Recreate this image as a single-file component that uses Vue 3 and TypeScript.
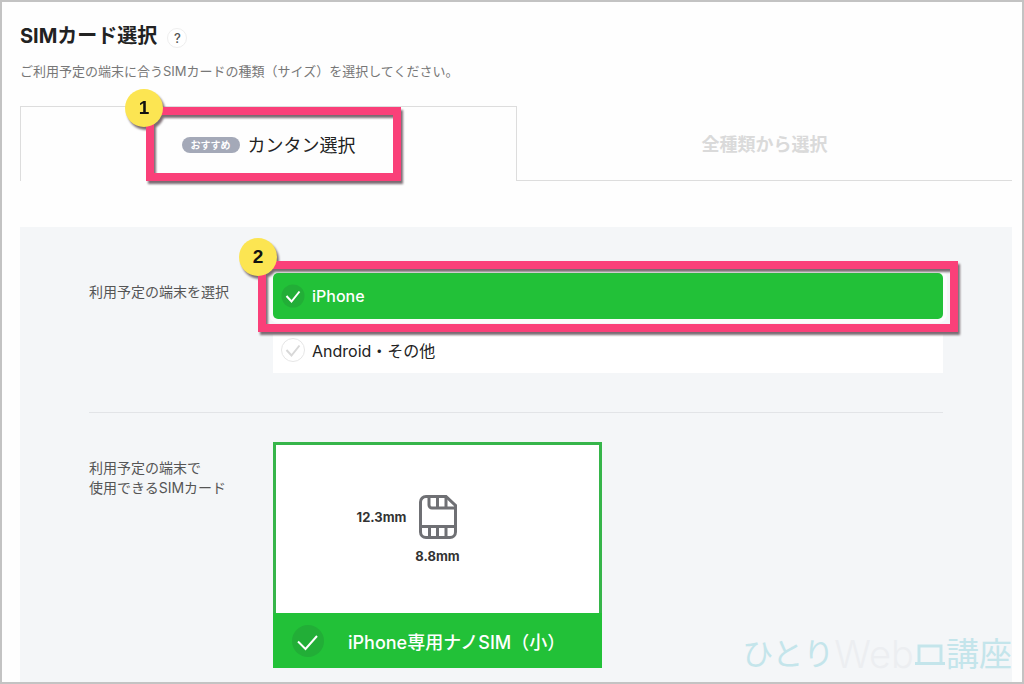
<script setup lang="ts">
import { ref } from 'vue'

const tab = ref<'easy' | 'all'>('easy')
const device = ref('iphone')
const card = ref('nano')

const devices = [
  { value: 'iphone', label: 'iPhone' },
  { value: 'android', label: 'Android・その他' },
]
</script>

<template>
  <main class="page">
    <header class="head">
      <h1>SIMカード選択</h1>
      <button class="help" type="button" aria-label="ヘルプ">?</button>
    </header>
    <p class="lead">ご利用予定の端末に合うSIMカードの種類（サイズ）を選択してください。</p>

    <div class="tabs" role="tablist">
      <button class="tab" :class="{ on: tab === 'easy' }" type="button" role="tab" :aria-selected="tab === 'easy'" @click="tab = 'easy'">
        <span class="pill">おすすめ</span>
        <span>カンタン選択</span>
        <span class="mark mark-tab"><b class="step">1</b></span>
      </button>
      <button class="tab" :class="{ on: tab === 'all' }" type="button" role="tab" :aria-selected="tab === 'all'" @click="tab = 'all'">全種類から選択</button>
    </div>

    <section class="panel">
      <div class="row">
        <h2 id="device-label">利用予定の端末を選択</h2>
        <div class="options" role="radiogroup" aria-labelledby="device-label">
          <label v-for="d in devices" :key="d.value" class="option" :class="{ on: device === d.value }">
            <input v-model="device" class="radio" type="radio" name="device" :value="d.value" />
            <svg class="check" viewBox="0 0 24 24" aria-hidden="true">
              <circle cx="12" cy="12" r="11.5" />
              <path d="M5.500 12l5 5.500 8-10" />
            </svg>
            <span>{{ d.label }}</span>
          </label>
          <span class="mark mark-device"><b class="step">2</b></span>
        </div>
      </div>

      <div class="row second">
        <h2 id="card-label">利用予定の端末で<br />使用できるSIMカード</h2>
        <div role="radiogroup" aria-labelledby="card-label">
          <label class="card">
            <input v-model="card" class="radio" type="radio" name="card" value="nano" />
            <span class="figure">
              <span class="tall">12.3mm</span>
              <svg class="sim" viewBox="0 0 38 44" aria-hidden="true">
                <path d="M7 1.500H27L36.500 10.500V37a5.500 5.500 0 0 1-5.500 5.500H7A5.500 5.500 0 0 1 1.500 37V7A5.500 5.500 0 0 1 7 1.500Z" />
                <path d="M10 2V10a3 3 0 0 0 3 3H36M18.500 2V12.500M27 2V12.500M2 31.500H36M10.500 32V42M18.500 32V42M27 32V42" />
              </svg>
              <span class="wide">8.8mm</span>
            </span>
            <span class="caption">
              <svg class="check big" viewBox="0 0 32 32" aria-hidden="true">
                <circle cx="16" cy="16" r="16" />
                <path d="M6 16.500l7.500 7.500L25 11" />
              </svg>
              <span>iPhone専用ナノSIM（小）</span>
            </span>
          </label>
        </div>
      </div>

      <div class="brand">
        <span class="brand-kana">ひとり</span><span class="brand-web">Web</span>
        <svg class="brand-icon" viewBox="0 0 32 24" aria-hidden="true"><path d="M5 20V4H27V20M1 21.500H31" /></svg>
        <span class="brand-kanji">講座</span>
      </div>
    </section>
  </main>
</template>

<style>
body {
  margin: 0;
}
</style>

<style scoped>
.page {
  box-sizing: border-box;
  min-height: 100vh;
  display: flex;
  flex-direction: column;
  padding: 20px 10px 0 18px;
  border: 2px solid #c3c3c3;
  background: #fefefe;
  color: #222;
  font-family: Inter, "Noto Sans CJK JP", sans-serif;
}
button {
  font: inherit;
}
.head {
  display: flex;
  align-items: center;
  gap: 10px;
}
h1 {
  margin: 0;
  font-size: 20px;
  line-height: 28px;
  font-weight: 700;
}
.help {
  width: 20px;
  height: 20px;
  margin-top: 4px;
  padding: 0;
  border: 1px solid #eee;
  border-radius: 50%;
  background: #fff;
  color: #555;
  font-size: 13px;
  font-weight: 500;
  line-height: 18px;
}
.lead {
  margin: 10px 0 24px;
  font-size: 13px;
  line-height: 22px;
  color: #777;
}
.tabs {
  display: flex;
  height: 75px;
}
.tab {
  position: relative;
  flex: 1;
  display: flex;
  align-items: center;
  justify-content: center;
  gap: 8px;
  padding: 0;
  border: 0;
  border-bottom: 1px solid #ddd;
  background: none;
  color: #dadada;
  font-size: 18px;
  font-weight: 700;
}
.tab.on {
  border: 1px solid #ddd;
  border-bottom: 0;
  color: #222;
  font-weight: 400;
}
.pill {
  width: 58px;
  margin-top: 2px;
  border-radius: 8px;
  background: #a4a9b8;
  color: #fff;
  font-size: 10px;
  line-height: 16px;
  font-weight: 700;
}
.mark {
  position: absolute;
  box-sizing: border-box;
  border: 8px solid #fa4079;
  filter: drop-shadow(2px 3px 1px #7a6b72);
  pointer-events: none;
}
.mark-tab {
  inset: 0 115px 0 125px;
}
.mark-device {
  inset: -12px -15px 41px -15px;
}
.step {
  position: absolute;
  left: -29px;
  top: -26px;
  width: 38px;
  height: 38px;
  border-radius: 50%;
  background: #fce552;
  color: #111;
  font: 700 19px/38px "Liberation Sans", sans-serif;
  text-align: center;
}
.mark-device .step {
  left: -27px;
  top: -31px;
}
.panel {
  position: relative;
  flex: 1;
  margin-top: 46px;
  padding: 46px 69px 14px;
  background: #f4f6f8;
}
.row {
  display: grid;
  grid-template-columns: 184px 1fr;
}
.row.second {
  margin-top: 39px;
  padding-top: 29px;
  border-top: 1px solid #e2e4e7;
}
h2 {
  margin: 9px 0 0;
  font-size: 14px;
  line-height: 20px;
  font-weight: 400;
  color: #555;
}
.second h2 {
  margin-top: 16px;
}
.options {
  position: relative;
}
.option {
  display: flex;
  align-items: center;
  gap: 7px;
  height: 46px;
  padding-left: 8px;
  background: #fff;
  font-size: 16px;
}
.option + .option {
  margin-top: 8px;
}
.option.on {
  border-radius: 5px;
  background: #22c138;
  box-shadow: 0 0 0 4px #fbfcfc;
  color: #fff;
  font-weight: 500;
}
.radio {
  position: absolute;
  opacity: 0;
  margin: 0;
}
.check {
  width: 24px;
  height: 24px;
  fill: none;
  stroke: #d8d8d8;
  stroke-width: 2;
}
.check circle {
  stroke: #e6e6e6;
  stroke-width: 1;
}
.on .check,
.check.big {
  stroke: #fff;
}
.on .check circle,
.big circle {
  fill: #22ae37;
  stroke: none;
}
.card {
  position: relative;
  display: block;
  width: 329px;
  box-sizing: border-box;
  border: 3px solid #36b54a;
  border-bottom: 0;
  background: #fff;
}
.figure {
  display: grid;
  grid-template-columns: 1fr 38px 1fr;
  gap: 8px 12px;
  padding: 50px 0 48px;
  align-items: center;
  font-size: 13px;
  line-height: 18px;
  font-weight: 700;
  color: #333;
}
.tall {
  text-align: right;
}
.sim {
  display: block;
  width: 38px;
  height: 44px;
  fill: none;
  stroke: #6f7074;
  stroke-width: 3;
}
.wide {
  grid-column: 1 / -1;
  text-align: center;
}
.caption {
  display: flex;
  align-items: center;
  gap: 24px;
  height: 55px;
  margin: 0 -3px;
  padding-left: 19px;
  background: #22c138;
  color: #fff;
  font-size: 18px;
  font-weight: 500;
}
.big {
  width: 32px;
  height: 32px;
}
.brand {
  position: absolute;
  right: 0;
  bottom: 6px;
  display: flex;
  align-items: center;
  color: #c4e5eb;
  font-weight: 400;
  line-height: 44px;
  white-space: nowrap;
}
.brand-kana {
  font-size: 31px;
}
.brand-web {
  font-size: 38px;
  font-weight: 300;
  color: #eceef1;
}
.brand-icon {
  width: 32px;
  height: 24px;
  fill: none;
  stroke: #c4e5eb;
  stroke-width: 3;
}
.brand-kanji {
  font-size: 33px;
}
</style>
